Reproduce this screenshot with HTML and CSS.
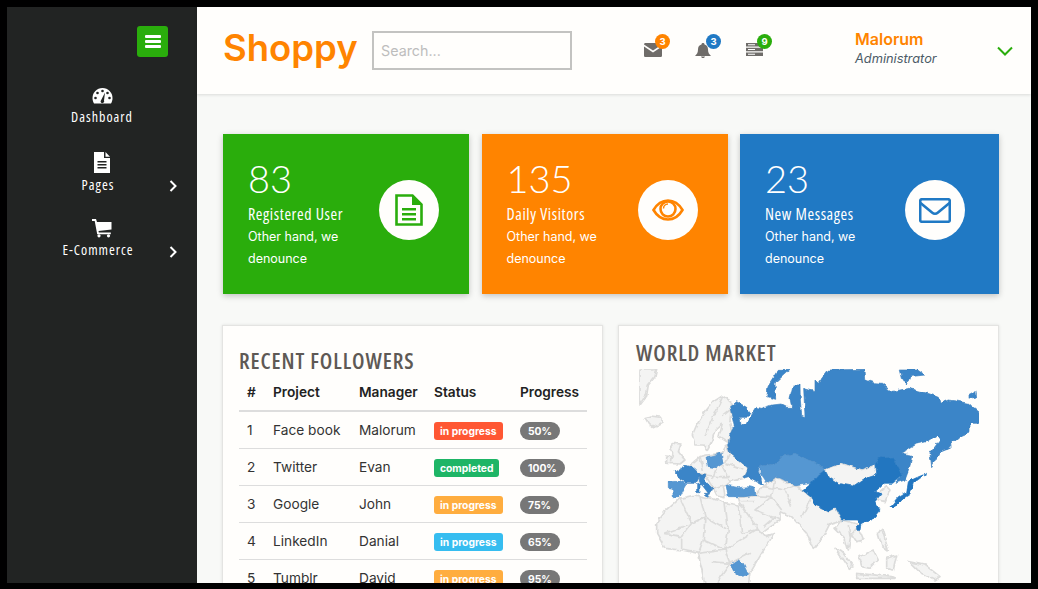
FILE: index.html
```html
<!DOCTYPE html>
<html lang="en">
<head>
	<meta charset="UTF-8">
	<title>Shoppy</title>
	<link rel="stylesheet" href="styles.css">
</head>
<body>
<div class="frame">
	<div class="sidebar">
		<div class="burger">
			<svg width="16" height="13" viewBox="0 0 16 13"><rect width="16" height="3" rx="1"/><rect y="5" width="16" height="3" rx="1"/><rect y="10" width="16" height="3" rx="1"/></svg>
		</div>
		<div class="navitem">
			<svg class="navicon" width="21" height="18" viewBox="0 0 21 18"><path class="wh" fill-rule="evenodd" d="M10.500 1C4.900 1 .5 5.500.5 11c0 2 .5 3.800 1.500 5.500h17c1-1.700 1.500-3.500 1.500-5.500C20.500 5.500 16.100 1 10.500 1z"/><circle class="dk" cx="10.500" cy="4" r="1.300"/><circle class="dk" cx="5.500" cy="6" r="1.300"/><circle class="dk" cx="3.500" cy="11" r="1.300"/><circle class="dk" cx="17.500" cy="11" r="1.300"/><circle class="dk" cx="15.500" cy="6" r="1.300"/><path class="dk" d="M13 5.500l-1 8a1.800 1.800 0 1 1-2.800-.5z"/></svg>
			<div class="navrow"><span class="navlabel">Dashboard</span></div>
		</div>
		<div class="navitem">
			<svg class="navicon" width="18" height="21" viewBox="0 0 18 21"><path class="wh" d="M1 0h10v6h6v15H1z"/><path class="wh" d="M12.500 0L17 4.700h-4.500z"/><path class="dk" d="M4.500 9h9v1.500h-9zM4.500 12h9v1.500h-9zM4.500 15h9v1.500h-9z"/></svg>
			<div class="navrow sub"><span class="navlabel">Pages</span>
				<svg class="navarrow" width="8" height="12" viewBox="0 0 8 12"><path d="M1.500 1l5 5-5 5"/></svg>
			</div>
		</div>
		<div class="navitem">
			<svg class="navicon" width="20" height="19" viewBox="0 0 20 19"><path class="wh" d="M0 0h4l1 3h14.500v7.500L6.500 12l.3 1.500h12v1.800H5.200L2.700 2H0z"/><circle class="wh" cx="7" cy="16.800" r="1.600"/><circle class="wh" cx="16.500" cy="16.800" r="1.600"/></svg>
			<div class="navrow sub"><span class="navlabel">E-Commerce</span>
				<svg class="navarrow" width="8" height="12" viewBox="0 0 8 12"><path d="M1.500 1l5 5-5 5"/></svg>
			</div>
		</div>
	</div>
	<div class="content">
		<div class="topbar">
			<div class="logo">Shoppy</div>
			<input class="search" type="text" placeholder="Search...">
			<div class="notes">
				<div class="note">
					<svg width="18" height="14" viewBox="0 0 18 14"><path class="gr" d="M0 1.500C0 .5.700 0 1.500 0h15c.8 0 1.500.5 1.500 1.500L9 7.500z"/><path class="gr" d="M0 3.500l9 6 9-6V12.500c0 1-.7 1.500-1.500 1.500h-15C.7 14 0 13.500 0 12.500z"/></svg>
					<span class="count orange">3</span>
				</div>
				<div class="note">
					<svg width="16" height="15" viewBox="0 0 16 15"><path class="gr" d="M8 0c1 0 1.500.6 1.500 1.400C12 2 13 4 13 6.500c0 3 1 4.500 3 6.500H0c2-2 3-3.500 3-6.500C3 4 4 2 6.500 1.400 6.500.6 7 0 8 0zM6 13.500h4c0 .9-.9 1.500-2 1.500s-2-.6-2-1.500z"/></svg>
					<span class="count blue">3</span>
				</div>
				<div class="note">
					<svg width="17" height="13" viewBox="0 0 17 13"><path class="gr" d="M0 0h17v3.500H0zM0 4.800h17v3.500H0zM0 9.600h17V13H0z"/><path class="lt" d="M2 1.300h7v1H2zM2 6h7v1H2zM2 10.800h7v1H2z"/></svg>
					<span class="count green">9</span>
				</div>
			</div>
			<div class="user">
				<div class="username">Malorum</div>
				<div class="userrole">Administrator</div>
			</div>
			<svg class="userarrow" width="16" height="10" viewBox="0 0 16 10"><path d="M1 1.500l7 7 7-7"/></svg>
		</div>
		<div class="main">
			<div class="stats">
				<div class="stat bggreen">
					<div class="stattext">
						<div class="statnum">83</div>
						<div class="stattitle">Registered User</div>
						<div class="statsub">Other hand, we denounce</div>
					</div>
					<div class="statcircle">
						<svg width="28" height="32" viewBox="0 0 28 32"><path class="stroke-green" d="M1.500 1.500h16l9 9v20h-25z"/><path class="fill-green" d="M17 1l10 10H17z"/><path class="fill-green" d="M7 14h14v2.400H7zM7 19h14v2.400H7zM7 24h14v2.400H7z"/></svg>
					</div>
				</div>
				<div class="stat bgorange">
					<div class="stattext">
						<div class="statnum">135</div>
						<div class="stattitle">Daily Visitors</div>
						<div class="statsub">Other hand, we denounce</div>
					</div>
					<div class="statcircle">
						<svg width="32" height="22" viewBox="0 0 32 22"><path class="stroke-orange" d="M1.500 11C5 5 10 1.500 16 1.500S27 5 30.500 11C27 17 22 20.500 16 20.500S5 17 1.500 11z"/><circle class="stroke-orange" cx="16" cy="10" r="7.500"/><path class="stroke-orange thin" d="M11.500 9.500c0-2.500 2-4.500 4.500-4.500"/></svg>
					</div>
				</div>
				<div class="stat bgblue">
					<div class="stattext">
						<div class="statnum">23</div>
						<div class="stattitle">New Messages</div>
						<div class="statsub">Other hand, we denounce</div>
					</div>
					<div class="statcircle">
						<svg width="32" height="25" viewBox="0 0 32 25"><rect class="stroke-blue" x="1.200" y="1.200" width="29.600" height="22.600" rx="1.800"/><path class="stroke-blue" d="M1.500 5L13 14.500c1.800 1.500 4.200 1.500 6 0L30.500 5"/></svg>
					</div>
				</div>
			</div>
			<div class="panels">
				<div class="panel followers">
					<div class="paneltitle">RECENT FOLLOWERS</div>
					<table class="ftable">
						<thead>
							<tr><th class="c1">#</th><th class="c2">Project</th><th class="c3">Manager</th><th class="c4">Status</th><th class="c5">Progress</th></tr>
						</thead>
						<tbody>
							<tr><td>1</td><td>Face book</td><td>Malorum</td><td><span class="tag red">in progress</span></td><td><span class="pill">50%</span></td></tr>
							<tr><td>2</td><td>Twitter</td><td>Evan</td><td><span class="tag teal">completed</span></td><td><span class="pill">100%</span></td></tr>
							<tr><td>3</td><td>Google</td><td>John</td><td><span class="tag amber">in progress</span></td><td><span class="pill">75%</span></td></tr>
							<tr><td>4</td><td>LinkedIn</td><td>Danial</td><td><span class="tag sky">in progress</span></td><td><span class="pill">65%</span></td></tr>
							<tr><td>5</td><td>Tumblr</td><td>David</td><td><span class="tag amber">in progress</span></td><td><span class="pill">95%</span></td></tr>
						</tbody>
					</table>
				</div>
				<div class="panel market">
					<div class="paneltitle">WORLD MARKET</div>
					<svg class="map" width="340" height="214" viewBox="72 147 1020 642">
						<filter id="rough" x="0" y="0" width="100%" height="100%">
							<feTurbulence type="fractalNoise" baseFrequency="0.05" numOctaves="2" seed="3"/>
							<feDisplacementMap in="SourceGraphic" scale="14" xChannelSelector="R" yChannelSelector="G"/>
						</filter>
						<g filter="url(#rough)">
						<!-- grey land -->
						<path class="land" d="M72 147L125 147L120 170L100 195L95 225L72 255Z"/>
						<path class="land" d="M90 293L110 288L142 292L140 310L115 323L100 310Z"/>
						<path class="land" d="M350 245L322 228L295 245L270 275L245 315L232 345L240 375L265 375L275 392L290 365L300 330L322 310L312 350L335 365L355 340L345 300Z"/>
						<path class="line" d="M322 232L290 300L270 350M345 270L320 290"/>
						<path class="land" d="M180 370L198 372L190 395L210 420L195 432L165 430L175 405L165 390Z"/>
						<path class="land" d="M155 408L170 410L170 430L155 430Z"/>
						<path class="land" d="M225 435L255 410L275 405L320 400L335 375L345 400L385 425L400 445L385 475L345 485L325 500L330 530L305 525L295 505L270 465L250 460Z"/>
						<path class="line" d="M255 410L265 450M320 435L345 485M305 443L290 480M345 400L330 430L385 450M270 465L310 470L345 470M295 505L325 495M330 375L345 395"/>
						<path class="land" d="M125 610L150 575L195 535L240 525L290 535L330 548L370 555L400 560L430 605L430 625L450 650L478 640L440 700L405 760L400 795L270 795L250 700L200 690L150 685L125 640Z"/>
						<path class="line" d="M195 535L230 610L150 640M230 610L270 590L255 530M270 590L340 630L330 548M340 630L330 690L250 700M330 690L430 625M370 555L380 640M330 690L345 730L300 795M405 700L345 730M150 640L200 650L230 610M200 650L200 690M270 590L265 660L250 700M380 640L430 625M265 660L330 690M290 725L345 730"/>
						<path class="land" d="M370 532L420 527L445 500L480 472L510 482L540 497L565 510L590 530L600 555L640 575L660 565L680 600L645 610L625 650L595 688L575 640L530 590L495 575L495 600L440 640L410 600L375 550Z"/>
						<path class="line" d="M420 527L470 530L500 570M445 500L510 510L530 560M510 482L565 510M590 530L560 590M470 530L420 570L495 600M380 545L420 545M480 472L470 530M540 497L510 510M445 620L480 590"/>
						<path class="land" d="M680 600L725 612L745 660L725 665L708 640L700 690L690 655L660 625Z"/>
						<path class="line" d="M700 615L705 650M725 625L712 640"/>
						<path class="land" d="M790 640L800 625L812 665L820 690L800 675Z"/>
						<path class="land" d="M660 685L680 695L715 740L700 745Z"/>
						<path class="land" d="M735 710L775 690L790 720L765 745L740 740Z"/>
						<path class="land" d="M815 715L845 705L835 750L815 745Z"/>
						<path class="land" d="M725 760L830 770L840 775L725 775Z"/>
						<path class="land" d="M880 725L930 735L975 770L960 780L910 755Z"/>
						<path class="land" d="M785 525L815 500L825 510L810 545L790 540Z"/>
						<!-- highlighted -->
						<path class="r1" d="M345 262L365 245L395 262L408 280L398 292L375 292L378 312L395 315L410 285L425 262L440 265L470 255L495 252L515 262L530 262L525 235L535 195L555 195L556 240L560 286L570 290L568 245L566 205L600 215L600 180L610 190L640 150L750 148L752 180L775 188L800 190L830 215L855 210L880 205L920 215L945 222L970 232L975 250L1000 240L1020 242L1060 250L1092 275L1092 310L1065 310L1065 335L1040 345L1015 368L1000 385L975 395L950 440L945 400L975 360L965 345L935 365L905 372L860 400L890 405L885 440L870 480L840 490L860 465L835 412L790 415L780 435L740 450L680 430L630 450L610 430L580 420L540 400L500 410L480 430L435 435L430 455L445 495L400 470L385 475L400 445L370 420L345 400L338 375L345 345L358 320Z"/>
						<path class="r1" d="M460 195L490 148L525 148L480 190L482 238L455 230Z"/>
						<path class="r1" d="M855 147L905 147L930 165L885 170L875 195L862 175Z"/>
						<path class="r1" d="M1062 225L1080 215L1082 232L1062 235Z"/>
						<path class="r2" d="M435 435L480 430L500 410L540 400L580 420L610 430L630 450L610 465L590 490L540 497L510 480L480 470L455 490L445 475L435 460Z"/>
						<path class="land flat" d="M630 450L680 430L740 450L780 435L782 465L745 478L715 498L670 490L640 470Z"/>
						<path class="r3" d="M565 510L590 490L610 465L630 450L640 470L670 490L715 498L745 478L782 465L780 435L790 415L835 412L860 465L830 490L810 490L780 515L800 520L780 545L795 570L770 600L735 615L725 600L680 600L660 565L640 575L600 555L590 530Z"/>
						<path class="r3" d="M724 618L738 612L735 628L726 628Z"/>
						<path class="r3" d="M825 560L850 530L875 515L880 485L900 475L935 460L895 490L885 525L850 548L835 565Z"/>
						<path class="r2" d="M273 412L300 405L318 398L325 430L305 443L280 440Z"/>
						<path class="r1" d="M180 455L212 435L240 445L255 462L240 490L215 490L195 475Z"/>
						<path class="r2" d="M160 487L195 482L215 492L205 510L195 530L175 530L172 505L160 503Z"/>
						<path class="r1" d="M250 465L272 465L270 482L297 510L280 520L265 500L250 485Z"/>
						<path class="r1" d="M268 520L285 520L280 530Z"/>
						<path class="r1" d="M245 490L255 490L255 518L245 518Z"/>
						<path class="r2" d="M333 495L370 503L400 500L420 505L422 525L385 530L340 530Z"/>
						<path class="r2" d="M347 735L370 720L385 730L402 765L380 772L355 755Z"/>
						</g>
					</svg>
				</div>
			</div>
		</div>
	</div>
</div>
</body>
</html>
```

FILE: styles.css
```css
*{
	box-sizing: border-box;
}
html, body{
	margin: 0;
	padding: 0;
	height: 589px;
	overflow: hidden;
	background-color: #000;
}
body{
	padding: 7px 7px 6px 7px;
	font-family: Inter, "Open Sans", sans-serif;
}
.frame{
	display: flex;
	height: 576px;
	overflow: hidden;
}

/* sidebar */
.sidebar{
	width: 190px;
	flex-shrink: 0;
	background-color: #222423;
	padding-top: 19px;
	color: #fff;
}
.burger{
	width: 31px;
	height: 31px;
	margin-left: 130px;
	margin-bottom: 30px;
	background-color: #2aad0c;
	border-radius: 3px;
	display: flex;
	align-items: center;
	justify-content: center;
}
.burger rect{
	fill: #fff;
}
.navitem{
	display: flex;
	flex-direction: column;
	align-items: center;
	margin-bottom: 25.500px;
}
.navicon{
	display: block;
}
.navicon .wh{
	fill: #fff;
}
.navicon .dk{
	fill: #222423;
}
.navrow{
	display: grid;
	width: 100%;
	margin-top: 3px;
	align-items: center;
}
.navrow.sub{
	padding: 0 20px 0 12px;
}
.navlabel{
	grid-area: 1 / 1;
	justify-self: center;
	font-family: "Open Sans", sans-serif;
	font-stretch: 75%;
	font-size: 14px;
	line-height: 18px;
	letter-spacing: 1px;
}
.navarrow{
	grid-area: 1 / 1;
	justify-self: end;
	margin-top: 3px;
}
.navarrow path{
	fill: none;
	stroke: #fff;
	stroke-width: 2;
}

/* top bar */
.content{
	flex: 1;
	min-width: 0;
	background-color: #f8f9f7;
}
.topbar{
	display: flex;
	align-items: center;
	height: 87px;
	padding-left: 26px;
	background-color: #fffefc;
	box-shadow: 0 1px 3px rgba(0,0,0,0.12);
}
.logo{
	width: 149px;
	font-size: 36.500px;
	font-weight: 600;
	color: #ff8400;
	margin-top: -5px;
}
.search{
	width: 200px;
	height: 39px;
	border: 2px solid #c3c3c1;
	background-color: #fffefc;
	padding: 0 7px;
	font-family: inherit;
	font-size: 14.300px;
	outline: none;
}
.search::placeholder{
	color: #bdbdbd;
}
.notes{
	display: flex;
	gap: 34px;
	margin-left: 72px;
}
.note{
	position: relative;
	width: 17px;
	height: 15px;
}
.note svg{
	display: block;
}
.gr{
	fill: #6f6c69;
}
.lt{
	fill: #fff;
}
.count{
	position: absolute;
	top: -9px;
	left: 11px;
	width: 15px;
	height: 15px;
	border-radius: 50%;
	color: #fff;
	font-size: 9.500px;
	font-weight: 700;
	line-height: 15px;
	text-align: center;
}
.orange{
	background-color: #ff8400;
}
.blue{
	background-color: #2079c4;
}
.green{
	background-color: #2aad0c;
}
.user{
	margin-left: 92px;
	margin-top: -3px;
	width: 142px;
}
.username{
	font-size: 16px;
	font-weight: 600;
	color: #ff8400;
	line-height: 20px;
}
.userrole{
	font-size: 12.800px;
	font-style: italic;
	color: #4b5a66;
	line-height: 20px;
}
.userarrow{
	margin-top: 1px;
}
.userarrow path{
	fill: none;
	stroke: #2aad0c;
	stroke-width: 2;
}

/* stat cards */
.main{
	padding: 40px 32px 0 26px;
}
.stats{
	display: flex;
	gap: 12.500px;
}
.stat{
	display: flex;
	justify-content: space-between;
	width: 246px;
	height: 160px;
	padding: 24px 30px 0 25px;
	color: #fff;
	box-shadow: 0 2px 6px rgba(0,0,0,0.22);
}
.bggreen{
	background-color: #2aad0c;
}
.bgorange{
	background-color: #ff8400;
}
.bgblue{
	width: 259px;
	padding-right: 34px;
	background-color: #2079c4;
}
.stattext{
	width: 125px;
}
.statnum{
	font-family: Lato, sans-serif;
	font-weight: 300;
	font-size: 38px;
	line-height: 40px;
}
.stattitle{
	font-family: "Open Sans", sans-serif;
	font-stretch: 75%;
	font-size: 16px;
	line-height: 20px;
	margin-top: 6px;
	letter-spacing: 0.6px;
}
.statsub{
	font-size: 12.500px;
	line-height: 22px;
	margin-top: 2px;
}
.statcircle{
	width: 60px;
	height: 60px;
	margin-top: 22px;
	border-radius: 50%;
	background-color: #fffefc;
	display: flex;
	align-items: center;
	justify-content: center;
}
.stroke-green, .stroke-orange, .stroke-blue{
	fill: none;
	stroke-width: 2.600;
}
.stroke-green{
	stroke: #2aad0c;
}
.stroke-orange{
	stroke: #ff8400;
}
.stroke-orange.thin{
	stroke-width: 1.500;
}
.stroke-blue{
	stroke: #2079c4;
}
.fill-green{
	fill: #2aad0c;
}

/* panels */
.panels{
	display: flex;
	gap: 15px;
	margin-top: 31px;
	margin-left: -1px;
}
.panel{
	width: 381px;
	height: 300px;
	background-color: #fffefc;
	border: 1px solid #e4e4e2;
	box-shadow: 0 0 3px rgba(0,0,0,0.1);
}
.paneltitle{
	font-family: "Open Sans", sans-serif;
	font-stretch: 75%;
	font-size: 22px;
	font-weight: 600;
	color: #5e5955;
	line-height: 24px;
	letter-spacing: 0.9px;
}
.followers{
	padding: 22px 15px 0 16px;
}
.market{
	padding: 14px 0 0 17px;
}
.map{
	display: block;
	margin-left: 3px;
	margin-top: 5px;
}
.land{
	fill: #f4f4f3;
	stroke: #dcdcdb;
	stroke-width: 5;
	stroke-linejoin: round;
}
.land.flat{
	stroke-width: 3;
}
.line{
	fill: none;
	stroke: #dcdcdb;
	stroke-width: 5;
	stroke-linejoin: round;
}
.r1, .r2, .r3{
	stroke-width: 2;
	stroke-linejoin: round;
}
.r1{
	fill: #3b85c8;
	stroke: #3b7fbd;
}
.r2{
	fill: #5597d2;
	stroke: #4a8cc8;
}
.r3{
	fill: #2176c0;
	stroke: #2176c0;
}

/* table */
.ftable{
	width: 348px;
	margin-top: 2px;
	border-collapse: collapse;
	table-layout: fixed;
	font-size: 13.700px;
	color: #333;
}
.ftable th{
	height: 37px;
	padding: 0 0 0 8px;
	text-align: left;
	font-size: 13.700px;
	font-weight: 600;
	color: #222;
	border-bottom: 2px solid #ddd;
}
.ftable td{
	height: 37px;
	padding: 0 0 0 8px;
	border-bottom: 1px solid #ddd;
	white-space: nowrap;
}
.c1{
	width: 26px;
}
.c2{
	width: 86px;
}
.c3{
	width: 75px;
}
.c4{
	width: 86px;
}
.c5{
	width: 75px;
}
.tag, .pill{
	display: inline-block;
	height: 18px;
	margin-top: 3px;
	font-size: 10.300px;
	font-weight: 700;
	line-height: 18px;
	color: #fff;
	vertical-align: middle;
}
.tag{
	padding: 0 6px;
	border-radius: 3px;
}
.pill{
	padding: 0 8px;
	border-radius: 9px;
	background-color: #777;
}
.red{
	background-color: #ff5733;
}
.teal{
	background-color: #1eb566;
}
.amber{
	background-color: #ffad3f;
}
.sky{
	background-color: #36bdf0;
}
```
